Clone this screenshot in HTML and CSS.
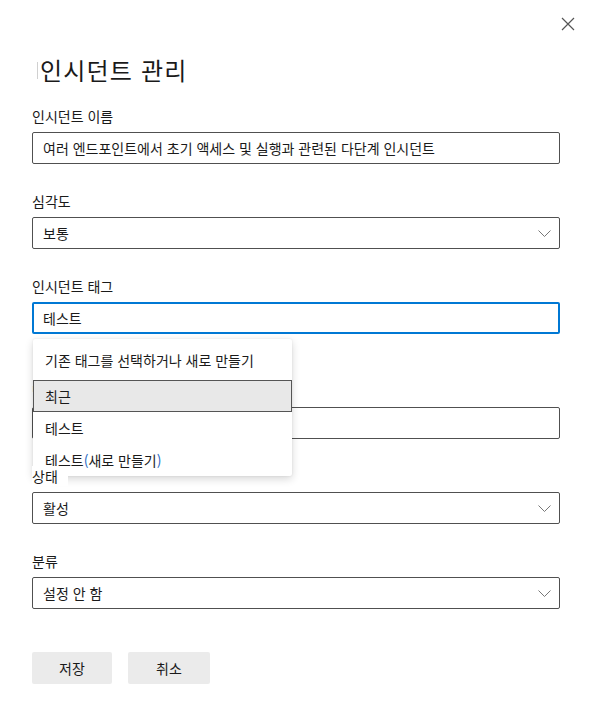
FILE: index.html
```html
<!DOCTYPE html>
<html lang="ko">
<head>
<meta charset="utf-8">
<link rel="stylesheet" href="styles.css">
</head>
<body>
<div class="panel">
  <div class="topbar">
    <button class="close" aria-label="닫기">
      <svg width="14" height="14" viewBox="0 0 14 14"><path d="M1 1L13 13M13 1L1 13" stroke="#555" stroke-width="1.2" fill="none"/></svg>
    </button>
  </div>
  <h1 class="title"><span class="caret"></span>인시던트 관리</h1>

  <div class="field">
    <label class="label">인시던트 이름</label>
    <div class="box">여러 엔드포인트에서 초기 액세스 및 실행과 관련된 다단계 인시던트</div>
  </div>

  <div class="field">
    <label class="label">심각도</label>
    <div class="box select"><span>보통</span><svg class="chev" width="13" height="7" viewBox="0 0 13 7"><path d="M0.5 0.5L6.5 6.5L12.5 0.5" stroke="#777" stroke-width="1" fill="none"/></svg></div>
  </div>

  <div class="field tagfield">
    <label class="label">인시던트 태그</label>
    <div class="box focus">테스트</div>
    <div class="menu">
      <div class="menu-head">기존 태그를 선택하거나 새로 만들기</div>
      <div class="menu-item active">최근</div>
      <div class="menu-item">테스트</div>
      <div class="menu-item">테스트<span class="paren">(</span>새로 만들기<span class="paren">)</span></div>
    </div>
  </div>

  <div class="field">
    <label class="label">담당자</label>
    <div class="box"></div>
  </div>

  <div class="field">
    <label class="label over">상태</label>
    <div class="box select"><span>활성</span><svg class="chev" width="13" height="7" viewBox="0 0 13 7"><path d="M0.5 0.5L6.5 6.5L12.5 0.5" stroke="#777" stroke-width="1" fill="none"/></svg></div>
  </div>

  <div class="field">
    <label class="label">분류</label>
    <div class="box select"><span>설정 안 함</span><svg class="chev" width="13" height="7" viewBox="0 0 13 7"><path d="M0.5 0.5L6.5 6.5L12.5 0.5" stroke="#777" stroke-width="1" fill="none"/></svg></div>
  </div>

  <div class="actions">
    <button class="btn save">저장</button>
    <button class="btn cancel">취소</button>
  </div>
</div>
</body>
</html>
```

FILE: styles.css
```css
html, body {
  margin: 0;
  padding: 0;
  background: #fff;
}
body {
  font-family: "Noto Sans CJK KR", "Noto Sans", sans-serif;
  color: #1a1a1a;
  font-size: 14px;
}
.panel {
  width: 528px;
  padding: 0 32px;
  position: relative;
}
.topbar {
  height: 48px;
  display: flex;
  justify-content: flex-end;
  align-items: flex-start;
}
.close {
  margin-top: 16px;
  margin-right: -16px;
  width: 16px;
  height: 16px;
  padding: 0;
  border: 0;
  background: transparent;
  display: flex;
  align-items: center;
  justify-content: center;
}
.title {
  margin: 0;
  font-size: 24px;
  font-weight: 400;
  letter-spacing: 1.2px;
  line-height: 44px;
  height: 44px;
  display: flex;
  align-items: center;
  padding-left: 5px;
  margin-bottom: 14px;
}
.caret {
  display: inline-block;
  width: 1px;
  height: 17px;
  background: #d0d0d0;
  margin-right: 2px;
}
.field {
  display: flex;
  flex-direction: column;
  margin-bottom: 27px;
}
.label {
  line-height: 20px;
  height: 20px;
  margin-bottom: 6px;
  align-self: flex-start;
}
.label.over {
  position: relative;
  z-index: 3;
  background: #fff;
  padding-right: 10px;
}
.box {
  box-sizing: border-box;
  height: 32px;
  border: 1px solid #505050;
  border-radius: 2px;
  padding: 0 10px;
  display: flex;
  align-items: center;
  line-height: 20px;
}
.select {
  justify-content: space-between;
  padding-right: 8px;
}
.focus {
  border: 2px solid #0078d4;
  padding: 0 9px;
}
.tagfield {
  position: relative;
  margin-top: 1px;
  margin-bottom: 47px;
}
.menu {
  position: absolute;
  left: 1px;
  top: 63px;
  width: 259px;
  background: #fff;
  box-shadow: 0 3px 8px rgba(0,0,0,0.16), 0 0 2px rgba(0,0,0,0.1);
  border-radius: 2px;
  z-index: 2;
}
.menu-head {
  height: 41px;
  display: flex;
  align-items: center;
  padding-left: 12px;
}
.menu-item {
  box-sizing: border-box;
  height: 32px;
  display: flex;
  align-items: center;
  padding-left: 12px;
}
.menu-item.active {
  background: #e8e8e8;
  border: 1px solid #555;
  padding-left: 11px;
}
.paren {
  color: #2b6cc4;
}
.actions {
  display: flex;
  gap: 16px;
  margin-top: 43px;
}
.btn {
  height: 32px;
  border: 0;
  border-radius: 2px;
  background: #ebebeb;
  font-family: inherit;
  font-size: 14px;
  color: #1a1a1a;
  padding: 0;
}
.save { width: 80px; }
.cancel { width: 82px; }
```
